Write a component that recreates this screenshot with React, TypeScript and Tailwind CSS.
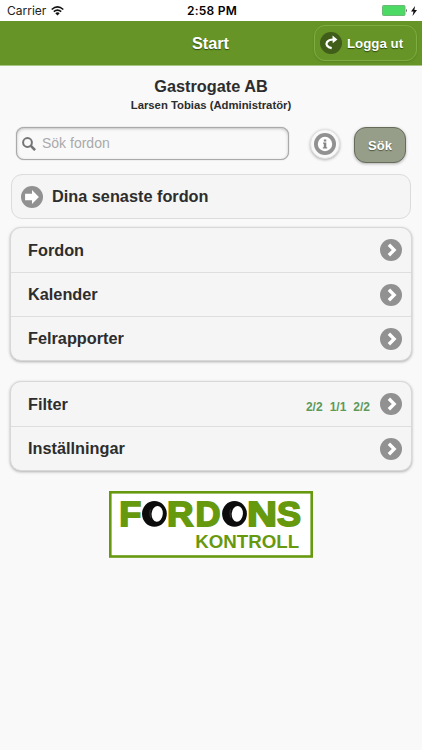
import React from "react";

function Disc({ children, className = "bg-[#919191]" }: { children: React.ReactNode; className?: string }) {
  return (
    <span className={`flex h-[22px] w-[22px] shrink-0 items-center justify-center rounded-full ${className}`}>
      <svg width="14" height="14" viewBox="0 0 14 14" fill="#fff" overflow="visible">{children}</svg>
    </span>
  );
}

function Row({ label, counts }: { label: string; counts?: string[] }) {
  return (
    <li className="flex h-[44px] items-center border-t border-[#dedede] pr-[9px] pl-[17px] first:border-t-0">
      <span className="flex-1 text-[16.3px]">{label}</span>
      {counts && (
        <span className="mt-[6px] mr-[10px] flex gap-[7px] text-[12px] text-[#5b9a5b]">
          {counts.map((c, i) => <span key={i}>{c}</span>)}
        </span>
      )}
      <Disc><path d="M3.7 2.9 6.1.6 12.5 7 6.1 13.4 3.7 11.1 7.8 7Z" /></Disc>
    </li>
  );
}

function Logo() {
  return (
    <svg className="mx-auto mt-[20px] block" width="204" height="67" viewBox="0 0 204 67">
      <rect x="1.3" y="1.3" width="201.4" height="64.2" fill="#fff" stroke="#67990f" strokeWidth="2.6" />
      <g fontFamily="Liberation Sans, Arial, sans-serif" fontWeight="bold" fill="#67990f">
        <g fontSize="35.5" stroke="#67990f" strokeWidth="1.8">
          <text x="10.3" y="35" textLength="22" lengthAdjust="spacingAndGlyphs">F</text>
          <text x="58" y="35" textLength="26.5" lengthAdjust="spacingAndGlyphs">R</text>
          <text x="86.5" y="35" textLength="25" lengthAdjust="spacingAndGlyphs">D</text>
          <text x="138" y="35" textLength="30" lengthAdjust="spacingAndGlyphs">N</text>
          <text x="168" y="35" textLength="24" lengthAdjust="spacingAndGlyphs">S</text>
        </g>
        <text x="86.2" y="56.7" fontSize="19" textLength="104" lengthAdjust="spacingAndGlyphs">KONTROLL</text>
      </g>
      {[45.4, 125.5].map((x) => (
        <g key={x}>
          <ellipse cx={x} cy="22.8" rx="12.4" ry="12.9" fill="#0c0c0c" />
          <ellipse cx={x + 2.8} cy="22.8" rx="5.6" ry="7.9" fill="#fff" transform={`rotate(5 ${x + 2.8} 22.8)`} />
          <path d={`M${x - 4} 18.5c-.7 2.7-.6 5.4.2 8.2`} fill="none" stroke="#555" strokeWidth=".6" />
        </g>
      ))}
    </svg>
  );
}

const listClass = "mx-[10px] overflow-hidden rounded-[11px] border border-[#d8d8d8] bg-[#f5f5f5] font-bold shadow-[0_1px_3px_rgba(0,0,0,0.3)]";

export default function App() {
  return (
    <div className="h-[750px] w-[422px] overflow-hidden bg-[#f9f9f9] font-['Liberation_Sans',Arial,sans-serif] text-[#2d2d2d]">
      <div className="grid h-[21px] grid-cols-3 items-center bg-white pt-px pr-[5px] pl-[7px] font-[Inter,sans-serif] text-[12px] text-[#222]">
        <div className="flex items-center gap-[5px]">
          <span>Carrier</span>
          <svg width="13" height="10" viewBox="0 0 13 10" fill="none" stroke="#111" strokeWidth="1.6">
            <path d="M.7 3.5Q6.5-1.6 12.3 3.5M2.8 5.7Q6.5 2.5 10.2 5.7" />
            <path d="M4.3 7.2Q6.5 5.4 8.7 7.2L6.5 9.5Z" fill="#111" stroke="none" />
          </svg>
        </div>
        <span className="text-center font-semibold tracking-[0.25px] whitespace-nowrap text-black">2:58 PM</span>
        <div className="flex items-center justify-end gap-[3px] pb-px">
          <svg width="26" height="11" viewBox="0 0 26 11">
            <rect x=".5" y=".5" width="22.5" height="10" rx="1" fill="#4cd964" stroke="#6db879" />
            <path d="M24 3.7q2 1.8 0 3.6Z" fill="#666" />
          </svg>
          <svg width="6" height="10" viewBox="0 0 6 10"><path d="M4 0 0 5.5h2.5L1.5 10 6 4H3.4Z" fill="#111" /></svg>
        </div>
      </div>
      <header className="grid h-[45px] grid-cols-[1fr_auto_1fr] items-center border-b border-[#a8c585] bg-[#669426] pr-[5px] pl-[4px] text-white [text-shadow:0_1px_1px_#2f4a0c]">
        <span />
        <h1 className="pt-px text-[16.3px] font-bold">Start</h1>
        <button className="flex h-[36px] w-[103px] items-center gap-[5px] justify-self-end rounded-[11px] border border-[#7fab43] pl-[5px] text-[13.3px] font-bold whitespace-nowrap shadow-[0_1px_2px_rgba(0,0,0,0.12)] [text-shadow:0_1px_1px_#2f4a0c]">
          <Disc className="bg-[#405d19]">
            <path d="M7.7 12.1C3.4 11.3 1.4 8.6 3 6.1 4.3 4.2 6.6 3.5 9.2 3.5" fill="none" stroke="#fff" strokeWidth="2.2" />
            <path d="M8.5-.6 13.4 3.4 8.7 7.2Z" />
          </Disc>
          <span className="pt-px">Logga ut</span>
        </button>
      </header>
      <div className="pt-[10px] text-center font-bold">
        <h2 className="text-[16.3px] leading-[20px]">Gastrogate AB</h2>
        <p className="pt-px text-[11.3px] leading-[17px]">Larsen Tobias (Administratör)</p>
      </div>
      <div className="mt-[13px] flex h-[47px] items-start pl-[16px]">
        <label className="flex h-[33px] w-[273px] items-center gap-[6px] rounded-[8px] border border-[#aaa] bg-[#f9f9f9] pl-[5px] shadow-[inset_0_1px_3px_rgba(0,0,0,0.22),0_0_1px_#999]">
          <svg width="14" height="14" viewBox="0 0 14 14" fill="none" stroke="#757575" strokeWidth="2"><circle cx="5.5" cy="5.5" r="4.4" /><path d="m8.7 8.7 4.4 4.5" strokeWidth="2.6" /></svg>
          <input className="w-[230px] bg-transparent text-[14px] outline-none placeholder:text-[#aaa]" placeholder="Sök fordon" />
        </label>
        <button className="mt-[2px] ml-[21px] flex h-[30px] w-[30px] items-center justify-center rounded-full border border-[#e2e2e2] bg-[#f9f9f9] shadow-[0_1px_3px_rgba(0,0,0,0.3)]">
          <svg width="22" height="22" viewBox="0 0 22 22"><circle cx="11" cy="11" r="11" fill="#919191" /><circle cx="11" cy="11" r="7.2" fill="#fff" /><path d="M9.8 6.4h2.5v2.1H9.8Zm-.8 3h3.3v4.8h.9v1.4H8.8v-1.4h1v-3.4H9Z" fill="#858585" /></svg>
        </button>
        <button className="ml-[14px] h-[36px] w-[52px] rounded-[12px] border border-[#666c5a] bg-[#969e8a] pt-px text-[13px] font-bold text-white shadow-[0_1px_3px_rgba(0,0,0,0.3)] [text-shadow:0_1px_1px_#4d5540]">Sök</button>
      </div>
      <div className="mr-[11px] ml-[11px] flex h-[45px] items-center gap-[9px] rounded-[11px] border border-[#dcdcdc] bg-[#f5f5f5] pl-[9px]">
        <Disc><path d="M7 3.7V.1L13.9 7 7 13.9v-3.6H.1V3.7Z" /></Disc>
        <span className="text-[16.3px] font-bold">Dina senaste fordon</span>
      </div>
      <ul className={`${listClass} mt-[8px]`}>
        <Row label="Fordon" />
        <Row label="Kalender" />
        <Row label="Felrapporter" />
      </ul>
      <ul className={`${listClass} mt-[20px]`}>
        <Row label="Filter" counts={["2/2", "1/1", "2/2"]} />
        <Row label="Inställningar" />
      </ul>
      <Logo />
    </div>
  );
}
